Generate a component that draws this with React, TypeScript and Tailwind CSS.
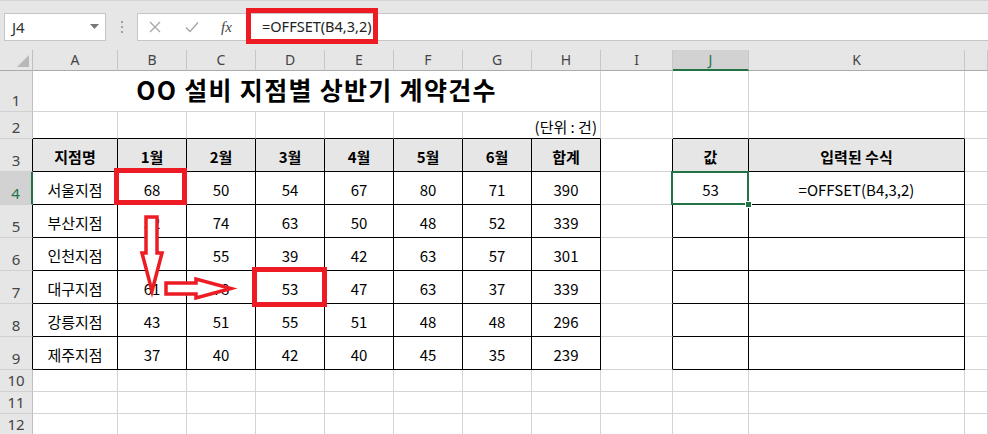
import React from 'react';

const COLS = ['A', 'B', 'C', 'D', 'E', 'F', 'G', 'H', 'I', 'J', 'K', 'L'];
const MONTHS = ['1월', '2월', '3월', '4월', '5월', '6월'];
const DATA: (string | number)[][] = [
  ['서울지점', 68, 50, 54, 67, 80, 71, 390],
  ['부산지점', 52, 74, 63, 50, 48, 52, 339],
  ['인천지점', 45, 55, 39, 42, 63, 57, 301],
  ['대구지점', 61, 78, 53, 47, 63, 37, 339],
  ['강릉지점', 43, 51, 55, 51, 48, 48, 296],
  ['제주지점', 37, 40, 42, 40, 45, 35, 239],
];

const cellFont = { fontFamily: '"Noto Sans CJK KR", "Noto Sans", sans-serif' };
const uiFont = { fontFamily: '"Noto Sans", "Open Sans", sans-serif' };

// c: 0 = row header, 1 = A ... 12 = L
const inTable = (r: number, c: number) =>
  r >= 3 && r <= 9 && ((c >= 1 && c <= 8) || c === 10 || c === 11);

function getText(r: number, c: number): string {
  if (r === 3) {
    if (c === 1) return '지점명';
    if (c >= 2 && c <= 7) return MONTHS[c - 2];
    if (c === 8) return '합계';
    if (c === 10) return '값';
    if (c === 11) return '입력된 수식';
  }
  if (r >= 4 && r <= 9 && c >= 1 && c <= 8) return String(DATA[r - 4][c - 1]);
  if (r === 4 && c === 10) return '53';
  if (r === 4 && c === 11) return '=OFFSET(B4,3,2)';
  return '';
}

function Cell({ r, c }: { r: number; c: number }) {
  const right = inTable(r, c) || inTable(r, c + 1) ? 'border-r-black' : 'border-r-[#d4d4d4]';
  const bottom = inTable(r, c) || inTable(r + 1, c) ? 'border-b-black' : 'border-b-[#d4d4d4]';
  const head = r === 3 && inTable(r, c);
  const text = getText(r, c);
  return (
    <div
      className={`relative flex items-center justify-center border-r border-b ${right} ${bottom} ${
        head ? 'bg-[#e7e6e6] font-bold' : 'bg-white'
      } text-[15px] text-black leading-none whitespace-nowrap`}
      style={cellFont}
    >
      <span className="pt-[2px]">{text}</span>
      {r === 4 && c === 2 && (
        <span className="absolute z-10 -left-[4px] -top-[4px] -right-[1px] -bottom-[1px] border-[5px] border-[#ed1c24]" />
      )}
      {r === 7 && c === 4 && (
        <span className="absolute z-10 -left-[4px] -top-[4px] -right-[3px] -bottom-[4px] border-[5px] border-[#ed1c24]" />
      )}
      {r === 4 && c === 10 && (
        <>
          <span className="absolute z-10 -left-[2px] -top-[1px] -right-[1px] -bottom-[1px] border-2 border-[#217346]" />
          <span className="absolute z-10 -right-[4px] -bottom-[4px] w-[7px] h-[7px] bg-[#217346] border border-white" />
        </>
      )}
    </div>
  );
}

function RowHeader({ r }: { r: number }) {
  const sel = r === 4;
  const right = sel
    ? 'border-r-2 border-r-[#217346]'
    : inTable(r, 1)
    ? 'border-r border-r-black'
    : 'border-r border-r-[#bfbfbf]';
  return (
    <div
      className={`flex items-end justify-center pb-[3px] border-b border-b-[#d0d0d0] ${right} ${
        sel ? 'bg-[#d2d2d2] text-[#217346]' : 'bg-[#e6e6e6] text-[#444]'
      } text-[15px] leading-none`}
      style={uiFont}
    >
      {r}
    </div>
  );
}

function Toolbar() {
  return (
    <div className="relative flex items-start h-[50px] pt-[12px] pl-[4px] bg-[#e6e6e6] border-t border-t-[#d4d4d4]">
      <div className="flex items-center justify-between w-[102px] h-[28px] bg-white border border-[#c6c6c6] pl-[7px] pr-[6px]">
        <span className="text-[15px] text-[#333]" style={uiFont}>J4</span>
        <svg width="9" height="6" viewBox="0 0 9 6">
          <path d="M0 0 L9 0 L4.5 5 Z" fill="#777" />
        </svg>
      </div>
      <div className="flex flex-col items-center justify-center gap-[3px] w-[31px] h-[28px]">
        <span className="w-[2px] h-[2px] bg-[#a0a0a0]" />
        <span className="w-[2px] h-[2px] bg-[#a0a0a0]" />
        <span className="w-[2px] h-[2px] bg-[#a0a0a0]" />
      </div>
      <div className="flex items-center flex-1 h-[28px] bg-white border border-[#c6c6c6] border-r-0">
        <div className="flex items-center w-[107px] h-full">
          <svg className="ml-[11px]" width="12" height="12" viewBox="0 0 12 12">
            <path d="M1 1 L11 11 M11 1 L1 11" stroke="#a6a6a6" strokeWidth="1.3" />
          </svg>
          <svg className="ml-[24px]" width="14" height="12" viewBox="0 0 14 12">
            <path d="M1 6.5 L5 10.5 L13 1.5" stroke="#a6a6a6" strokeWidth="1.4" fill="none" />
          </svg>
          <span
            className="ml-[22px] text-[15px] italic text-[#444]"
            style={{ fontFamily: '"Liberation Serif", serif' }}
          >
            fx
          </span>
        </div>
        <span className="ml-[17px] text-[14.5px] text-[#222]" style={uiFont}>
          =OFFSET(B4,3,2)
        </span>
      </div>
      <span className="absolute left-[246px] top-[7px] w-[132px] h-[36px] border-[5px] border-[#ed1c24]" />
    </div>
  );
}

export default function App() {
  const bodyRows = Array.from({ length: 12 }, (_, i) => i + 1);
  return (
    <div className="w-[988px] h-[434px] overflow-hidden bg-white">
      <Toolbar />
      <div className="relative grid grid-cols-[33px_85px_69px_69px_69px_69px_69px_69px_69px_72px_76px_216px_1fr] grid-rows-[21px_41px_27px_33px_33px_33px_33px_33px_33px_33px_22px_22px_22px]">
        {/* column headers */}
        <div className="relative bg-[#e6e6e6] border-r border-b border-r-[#bfbfbf] border-b-[#ababab]">
          <svg className="absolute right-[3px] bottom-[3px]" width="12" height="12" viewBox="0 0 12 12">
            <path d="M12 0 L12 12 L0 12 Z" fill="#b8b8b8" />
          </svg>
        </div>
        {COLS.map(l => (
          <div
            key={l}
            className={`flex items-center justify-center border-r border-r-[#c6c6c6] text-[14px] leading-none ${
              l === 'J'
                ? 'bg-[#d2d2d2] border-b-2 border-b-[#217346] text-[#217346]'
                : 'bg-[#e6e6e6] border-b border-b-[#ababab] text-[#444]'
            }`}
            style={uiFont}
          >
            {l === 'L' ? '' : l}
          </div>
        ))}

        {bodyRows.map(r => {
          if (r === 1) {
            return (
              <React.Fragment key={r}>
                <RowHeader r={r} />
                <div
                  className="col-span-8 flex items-end justify-center pb-[9px] border-r border-b border-[#d4d4d4] text-[25px] font-bold tracking-[1.3px] text-black leading-none"
                  style={cellFont}
                >
                  OO 설비 지점별 상반기 계약건수
                </div>
                {[9, 10, 11, 12].map(c => (
                  <Cell key={c} r={r} c={c} />
                ))}
              </React.Fragment>
            );
          }
          if (r === 2) {
            return (
              <React.Fragment key={r}>
                <RowHeader r={r} />
                {[1, 2, 3, 4, 5, 6].map(c => (
                  <Cell key={c} r={r} c={c} />
                ))}
                <div
                  className="col-span-2 flex items-end justify-end pb-[4px] pr-[3px] border-r border-b border-r-[#d4d4d4] border-b-black text-[15px] text-black leading-none"
                  style={cellFont}
                >
                  (단위 : 건)
                </div>
                {[9, 10, 11, 12].map(c => (
                  <Cell key={c} r={r} c={c} />
                ))}
              </React.Fragment>
            );
          }
          return (
            <React.Fragment key={r}>
              <RowHeader r={r} />
              {Array.from({ length: 12 }, (_, i) => i + 1).map(c => (
                <Cell key={c} r={r} c={c} />
              ))}
            </React.Fragment>
          );
        })}

        {/* hand-drawn arrows over the sheet */}
        <svg
          className="absolute z-20 left-0 top-0 pointer-events-none"
          width="988"
          height="384"
          viewBox="0 0 988 384"
        >
          <polygon
            points="146,167 157,167 157,203 162,203 152,241 142,203 146,203"
            fill="white"
            stroke="#ed1c24"
            strokeWidth="3.5"
          />
          <polygon
            points="166,233 196,233 196,229 231,238.5 196,248 196,244 166,244"
            fill="white"
            stroke="#ed1c24"
            strokeWidth="3.5"
          />
        </svg>
      </div>
    </div>
  );
}
